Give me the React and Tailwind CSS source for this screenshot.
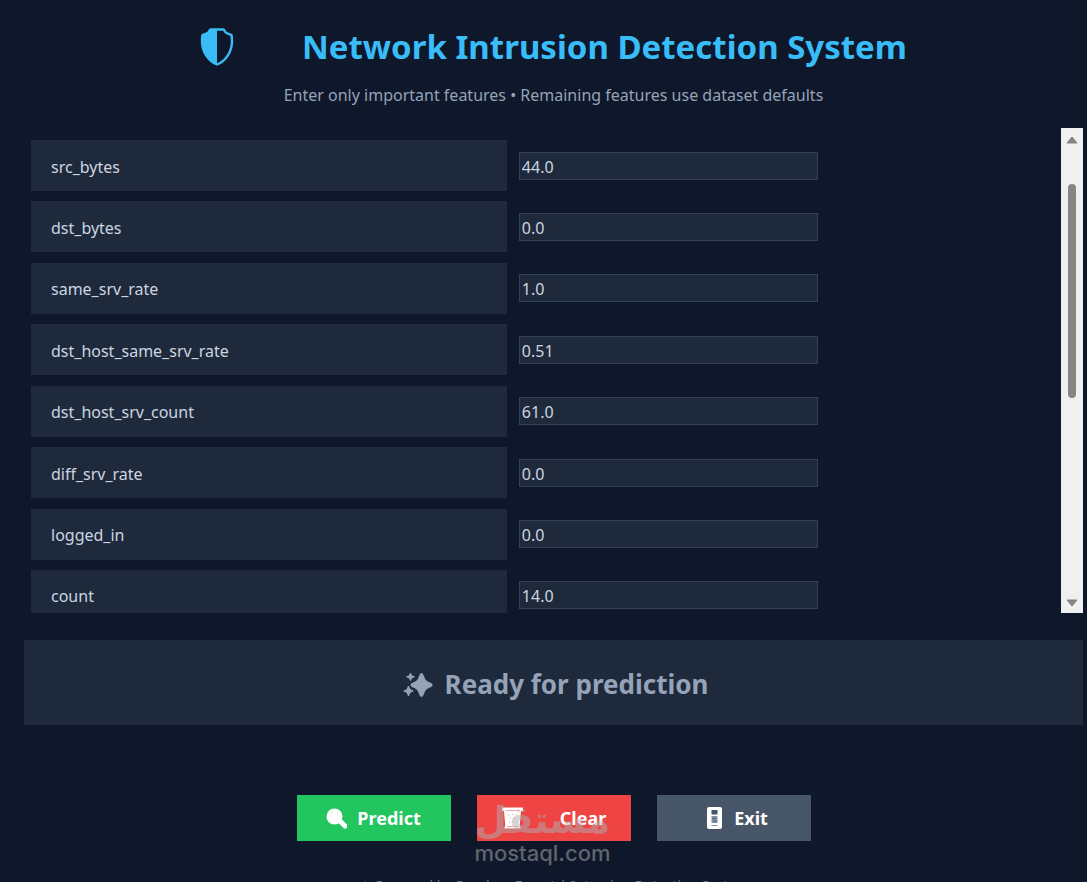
import React from "react";

const features = [
  ["src_bytes", "44.0"],
  ["dst_bytes", "0.0"],
  ["same_srv_rate", "1.0"],
  ["dst_host_same_srv_rate", "0.51"],
  ["dst_host_srv_count", "61.0"],
  ["diff_srv_rate", "0.0"],
  ["logged_in", "0.0"],
  ["count", "14.0"],
];

function ShieldIcon() {
  return (
    <svg className="h-[38px] w-[34px]" viewBox="0 0 34 38" aria-hidden="true">
      <path
        d="M10.500 1.500h13c1.200 1 1.500 2.200 2.500 3.200 1.300 1.100 3.500 1.300 5.500 2.300.3 1.800.5 3.700.5 6C32 23.500 26 33 17 36.500 8 33 2 23.500 2 13c0-2.300.2-4.200.5-6 2-1 4.200-1.200 5.500-2.300 1-1 1.300-2.200 2.500-3.200z"
        fill="none"
        stroke="#38bdf8"
        strokeWidth="2.400"
        strokeLinejoin="round"
      />
      <path
        d="M10.500 1.500H17v35C8 33 2 23.500 2 13c0-2.300.2-4.200.5-6 2-1 4.200-1.200 5.500-2.300 1-1 1.300-2.200 2.500-3.200z"
        fill="#38bdf8"
      />
    </svg>
  );
}

function SparklesIcon() {
  return (
    <svg className="h-[26px] w-[30px]" viewBox="0 0 30 26" fill="#94a3b8" aria-hidden="true">
      <path
        d="M18.500 1.500c1 0 1.300.8 1.800 2.500 1.500 4.500 2.500 5.700 7 7.300 1.300.5 1.700.8 1.700 1.700s-.4 1.200-1.700 1.700c-4.500 1.600-5.500 2.800-7 7.300-.5 1.700-.8 2.500-1.800 2.500s-1.300-.8-1.800-2.500c-1.500-4.500-2.500-5.700-7-7.300-1.300-.5-1.700-.8-1.700-1.700s.4-1.200 1.700-1.700c4.500-1.600 5.500-2.800 7-7.300.5-1.700.8-2.500 1.800-2.500z"
        stroke="#94a3b8"
        strokeWidth="1.200"
      />
      <path d="M7.500 1c.9 2.500 1.400 3 4 3.800-2.600.9-3.100 1.300-4 3.800-.9-2.500-1.400-2.900-4-3.800 2.600-.8 3.100-1.300 4-3.800z" stroke="#94a3b8" />
      <path d="M5.500 14c1.100 3.200 1.700 3.800 4.700 5-3 1.100-3.600 1.700-4.700 5-1.100-3.300-1.700-3.900-4.700-5 3-1.200 3.600-1.800 4.700-5z" stroke="#94a3b8" />
    </svg>
  );
}

function MagnifierIcon() {
  return (
    <svg className="h-[21px] w-[21px]" viewBox="0 0 21 21" aria-hidden="true">
      <circle cx="8.500" cy="8.500" r="8" fill="#fff" />
      <path d="M13 12l6 6" stroke="#fff" strokeWidth="5" strokeLinecap="round" />
      <path d="M5 4.500h1.500M11 5h1M4 8h1" stroke="#b6e9c9" strokeWidth="1" />
    </svg>
  );
}

function TrashIcon() {
  return (
    <svg className="h-[22px] w-[23px]" viewBox="0 0 23 22" aria-hidden="true">
      <path d="M1 .5h21v3.500h-2L18.800 18l1 3.500H3.200l1-3.500L3 4H1z" fill="#fff" />
      <path d="M5 3.500h13M6 19.500h11" stroke="#f0a3a3" strokeWidth="1" />
      <path d="M7 8h1M11 7h1M15 8h1M9 11h1M13 11h1M8 15h1M12 14h1M15 15h1" stroke="#d8a0a0" strokeWidth="1.200" />
    </svg>
  );
}

function DoorIcon() {
  return (
    <svg className="h-[22px] w-[15px]" viewBox="0 0 15 22" aria-hidden="true">
      <rect width="15" height="22" rx="2" fill="#fff" />
      <path d="M4.500 3h6v4.500h-6z" fill="#475569" />
      <path d="M4.500 9h6v7h-6z" fill="#8592a3" />
      <path d="M4.500 18.500h6" stroke="#8592a3" />
      <path d="M5 11.500h4M6 14h4" stroke="#5b6a7e" />
    </svg>
  );
}

function ScrollTrack() {
  return (
    <div className="flex w-[22px] shrink-0 flex-col items-center bg-[#f0f0f0] pt-2 pb-1.5" aria-hidden="true">
      <svg className="h-2 w-3" viewBox="0 0 12 8">
        <path d="M6 1L11 7H1z" fill="#858585" stroke="#858585" strokeLinejoin="round" />
      </svg>
      <div className="mt-10 h-[214px] w-2 rounded-full bg-[#858585]" />
      <svg className="mt-auto h-2 w-3" viewBox="0 0 12 8">
        <path d="M6 7L11 1H1z" fill="#858585" stroke="#858585" strokeLinejoin="round" />
      </svg>
    </div>
  );
}

function ActionButton({ color, spacing, icon, children }) {
  return (
    <button
      type="button"
      className={`flex h-[46px] w-[154px] items-center justify-center text-[18px] font-bold text-white ${spacing} ${color}`}
    >
      {icon}
      {children}
    </button>
  );
}

export default function App() {
  return (
    <main className="flex h-screen flex-col overflow-hidden bg-[#0f172a] pr-1 pl-6 font-['Noto_Sans',sans-serif]">
      <header className="flex flex-col items-center pt-5">
        <h1 className="flex items-center gap-[68px] text-[33px] leading-[54px] font-bold whitespace-nowrap text-[#38bdf8]">
          <ShieldIcon />
          Network Intrusion Detection System
        </h1>
        <p className="mt-2 text-[16px] leading-[26px] text-[#94a3b8]">
          Enter only important features • Remaining features use dataset defaults
        </p>
      </header>

      <section className="mt-5 flex h-[485px] shrink-0">
        <div className="min-w-0 flex-1 overflow-y-auto pt-3 pl-[7px] [scrollbar-width:none]">
          <div className="flex h-[481px] flex-col justify-between">
            {features.map(([name, value]) => (
              <div key={name} className="flex h-[51px] shrink-0 items-center gap-3">
                <label
                  htmlFor={name}
                  className="flex h-full w-[46.200%] items-center bg-[#1e293b] px-5 pt-0.5 text-[16px] text-[#cbd5e1]"
                >
                  {name}
                </label>
                <input
                  id={name}
                  defaultValue={value}
                  className="h-7 w-[29%] border border-[#334155] bg-[#1e293b] px-0.5 pt-0.5 text-[16px] text-[#cbd5e1] outline-none"
                />
              </div>
            ))}
          </div>
        </div>
        <ScrollTrack />
      </section>

      <section className="mt-[27px] flex h-[85px] shrink-0 items-center justify-center gap-3 bg-[#1e293b] pt-1 pl-1 text-[26px] font-bold text-[#94a3b8]">
        <SparklesIcon />
        Ready for prediction
      </section>

      <div className="relative mt-[70px] flex justify-center gap-[26px] self-center">
        <ActionButton color="bg-[#22c55e]" spacing="gap-2.5" icon={<MagnifierIcon />}>
          Predict
        </ActionButton>
        <ActionButton color="bg-[#ef4444]" spacing="gap-9" icon={<TrashIcon />}>
          Clear
        </ActionButton>
        <ActionButton color="bg-[#475569]" spacing="gap-3 pl-2" icon={<DoorIcon />}>
          Exit
        </ActionButton>
        <div className="pointer-events-none absolute top-1.5 left-1/2 flex w-[140px] -translate-x-[81px] flex-col items-center text-[#b0b0b0] opacity-50">
          <span dir="rtl" className="font-['DejaVu_Sans',sans-serif] text-[37px] leading-10 font-bold">
            مستقل
          </span>
          <span className="font-['Inter',sans-serif] text-[22px] leading-6 font-medium">mostaql.com</span>
        </div>
      </div>

      <footer className="mt-[35px] flex justify-center gap-2 text-[14px] leading-5 whitespace-nowrap text-[#64748b]">
        <span className="font-['DejaVu_Sans',sans-serif]">{"\u26A1\uFE0E"}</span>
        <span>Powered by Random Forest | Intrusion Detection System</span>
      </footer>
    </main>
  );
}
